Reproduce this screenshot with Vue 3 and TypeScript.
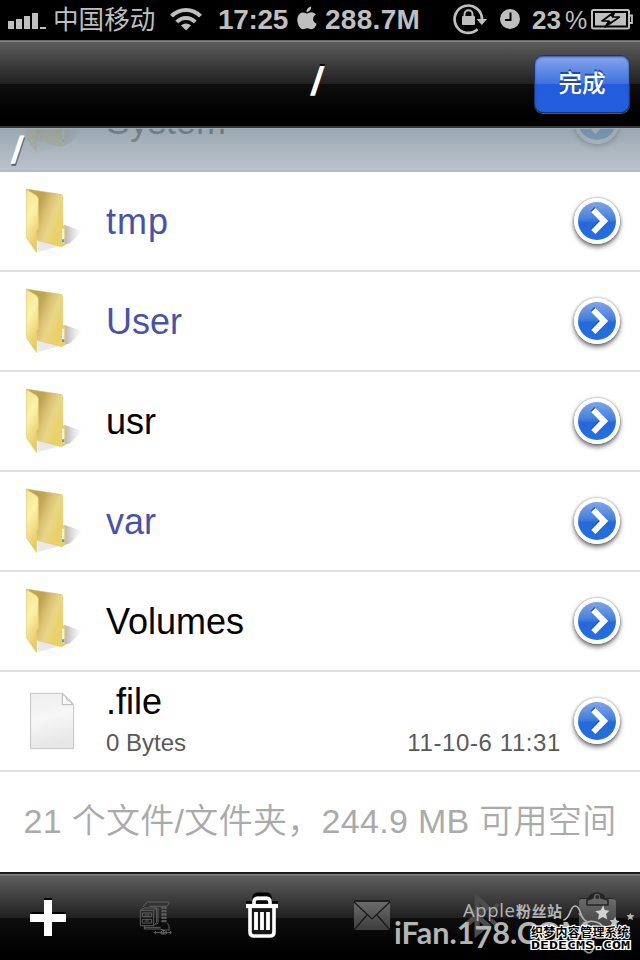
<script setup lang="ts">
interface Entry {
  name: string
  kind: 'folder' | 'file'
  link?: boolean
  wide?: boolean
  size?: string
  date?: string
}

const entries: Entry[] = [
  { name: 'System', kind: 'folder' },
  { name: 'tmp', kind: 'folder', link: true, wide: true },
  { name: 'User', kind: 'folder', link: true },
  { name: 'usr', kind: 'folder' },
  { name: 'var', kind: 'folder', link: true },
  { name: 'Volumes', kind: 'folder' },
  { name: '.file', kind: 'file', size: '0 Bytes', date: '11-10-6 11:31' },
]
</script>

<template>
  <div class="screen">
    <svg class="defs" width="0" height="0">
      <defs>
        <linearGradient id="flap" x1="0" y1="0" x2="0.3" y2="1">
          <stop offset="0" stop-color="#f3e294" />
          <stop offset="0.45" stop-color="#fdf2aa" />
          <stop offset="1" stop-color="#e6c963" />
        </linearGradient>
        <linearGradient id="back" gradientUnits="userSpaceOnUse" x1="112" y1="120" x2="190" y2="150">
          <stop offset="0" stop-color="#bda355" />
          <stop offset="0.3" stop-color="#d9c070" />
          <stop offset="0.6" stop-color="#e9d588" />
          <stop offset="1" stop-color="#ebd064" />
        </linearGradient>
        <linearGradient id="shade" x1="0" y1="0" x2="1" y2="0">
          <stop offset="0" stop-color="#777" stop-opacity="0.6" />
          <stop offset="0.6" stop-color="#999" stop-opacity="0.25" />
          <stop offset="1" stop-color="#999" stop-opacity="0" />
        </linearGradient>
        <linearGradient id="paper" x1="0" y1="0" x2="0.2" y2="1">
          <stop offset="0" stop-color="#eeeeee" />
          <stop offset="0.5" stop-color="#f7f7f7" />
          <stop offset="1" stop-color="#e6e6e6" />
        </linearGradient>
        <linearGradient id="disc" x1="0" y1="0" x2="0" y2="1">
          <stop offset="0" stop-color="#7fa6e8" />
          <stop offset="0.5" stop-color="#3f7bdc" />
          <stop offset="0.52" stop-color="#2468d9" />
          <stop offset="1" stop-color="#266fe0" />
        </linearGradient>
        <linearGradient id="dim" x1="0" y1="0" x2="0" y2="1">
          <stop offset="0" stop-color="#6b6b6b" />
          <stop offset="1" stop-color="#3d3d3d" />
        </linearGradient>
      </defs>
    </svg>

    <header class="status">
      <svg class="bars" width="38" height="16" viewBox="0 0 38 16" fill="#bfbfbf">
        <rect x="0" y="8" width="6" height="8" /><rect x="8" y="6" width="6" height="10" />
        <rect x="16" y="3" width="6" height="13" /><rect x="24" y="0" width="6" height="16" />
        <rect x="32" y="14" width="6" height="2" />
      </svg>
      <span class="carrier">中国移动</span>
      <svg class="wifi" width="32" height="24" viewBox="0 0 32 24" fill="none" stroke="#bfbfbf" stroke-width="4">
        <path d="M1.500 9.200A20 20 0 0 1 30.500 9.200" />
        <path d="M6.800 15A12.500 12.500 0 0 1 25.200 15" />
        <path d="M16 23.500L11 18.500A7 7 0 0 1 21 18.500Z" fill="#bfbfbf" stroke="none" />
      </svg>
      <span class="time">17:25</span>
      <svg class="apple" width="20" height="24" viewBox="0 0 20 24" fill="#bfbfbf">
        <path d="M14.200 0.500C14.500 3.500 12 6 9.500 6C9.200 3.500 11.500 1 14.200 0.500Z" />
        <path d="M10 7.500C11.500 7.500 12.500 6.300 14.600 6.300C16.500 6.300 18 7.300 18.900 8.600C14.800 11 15.400 16.300 19.700 17.800C18.500 20.800 16.700 23.300 14.500 23.300C12.800 23.300 12.200 22.300 10.300 22.300C8.400 22.300 7.600 23.300 6.100 23.300C3 23.300 0.300 18 0.300 13.700C0.300 9 3.200 6.400 6 6.400C7.800 6.400 9 7.500 10 7.500Z" />
      </svg>
      <span class="memory">288.7M</span>
      <svg class="lock" width="34" height="32" viewBox="0 0 34 32">
        <path d="M24.600 26.300A13.700 13.700 0 1 1 29 16" fill="none" stroke="#bfbfbf" stroke-width="2.700" />
        <path d="M23.500 16H34L28.800 22Z" fill="#bfbfbf" />
        <path d="M11.500 14V11.300A4 4 0 0 1 19.500 11.300V14" fill="none" stroke="#bfbfbf" stroke-width="2" />
        <rect x="9" y="13" width="13" height="9" rx="1" fill="#bfbfbf" />
      </svg>
      <svg class="clock" width="20" height="20" viewBox="0 0 20 20">
        <circle cx="10" cy="10" r="10" fill="#bfbfbf" />
        <path d="M10.500 3.500V11H5" fill="none" stroke="#000" stroke-width="2" />
      </svg>
      <span class="charge">23</span><span class="percent">%</span>
      <svg class="battery" width="42" height="21" viewBox="0 0 42 21">
        <rect x="1" y="1" width="37" height="18.500" rx="1.500" fill="none" stroke="#bfbfbf" stroke-width="2" />
        <path d="M38 6.500H41V14H38" fill="none" stroke="#bfbfbf" stroke-width="1.800" />
        <rect x="4" y="4" width="31" height="12.500" fill="#bfbfbf" />
        <path d="M24 2.500L11 12H18L14 18L28.500 8H21.500Z" fill="#bfbfbf" stroke="#000" stroke-width="1.600" stroke-linejoin="round" />
        <path d="M24 2.500L21.500 8L18.500 6.500ZM14 18L18 12L21 13.200Z" fill="#000" />
      </svg>
    </header>

    <nav class="navbar">
      <h1 class="title">/</h1>
      <button class="done">完成</button>
    </nav>

    <main class="content">
      <div class="section"><span class="path">/</span></div>
      <ul class="list">
        <li v-for="e in entries" :key="e.name" class="row">
          <svg v-if="e.kind === 'folder'" class="icon" width="62" height="70" viewBox="66 48 186 210">
            <path d="M115 246L180 228L112 205Z" fill="#999" opacity="0.22" />
            <path d="M190 226L210 220L224 206L246 183L214 172L194 165Z" fill="url(#shade)" />
            <path d="M79 57L182 73Q188 74 188 80V168L194 167Q197 168 197 172V222L186 230L112 211Z" fill="url(#back)" stroke="#d6bc60" stroke-width="1.500" />
            <path d="M79 58L108 76Q115 80 115 88V176L110 182V248L80 205Z" fill="url(#flap)" stroke="#e2ca70" stroke-width="2" />
            <path d="M185 175H194V216L185 218Z" fill="#f7f5e8" stroke="#dec366" stroke-width="2" />
            <rect x="186" y="208" width="7" height="8" fill="#4c9add" />
          </svg>
          <svg v-else class="icon" width="62" height="70" viewBox="66 48 186 210">
            <path d="M92 70H183Q190 70 196 77L216 97Q221 103 221 110V236H92Z" fill="url(#paper)" stroke="#c4c4c4" stroke-width="3" />
            <path d="M187 73V104H218Q212 92 202 90Q200 78 187 73Z" fill="#fafafa" stroke="#b8b8b8" stroke-width="3" />
          </svg>
          <div class="label">
            <span class="name" :class="{ link: e.link, wide: e.wide }">{{ e.name }}</span>
            <span v-if="e.size" class="meta"><span>{{ e.size }}</span><span class="date">{{ e.date }}</span></span>
          </div>
          <span class="go">
            <svg width="46" height="46" viewBox="0 0 46 46">
              <circle cx="23" cy="23" r="23" fill="#fff" />
              <circle cx="23" cy="23" r="19" fill="url(#disc)" />
              <path d="M4 23Q23 18 42 23V24H4Z" fill="#3474db" opacity="0.5" />
              <path d="M19.300 12L30 23L19.300 34" transform="translate(-.8 -1)" fill="none" stroke="#1f4fae" stroke-width="5.500" />
              <path d="M19.300 12L30 23L19.300 34" fill="none" stroke="#fff" stroke-width="6" />
            </svg>
          </span>
        </li>
      </ul>
      <p class="summary">21 个文件/文件夹，244.9 MB 可用空间</p>
    </main>

    <footer class="toolbar">
      <svg width="36" height="44" viewBox="0 0 36 44">
        <path d="M14 4H22V18H36V26H22V42H14V26H0V18H14Z" fill="#000" />
        <path d="M14 6H22V20H36V28H22V42H14V28H0V20H14Z" fill="#fff" />
      </svg>
      <svg width="32" height="44" viewBox="420 100 96 132" fill="none" stroke="#606060" stroke-width="3">
        <path d="M421 149L434 142H470V185L461 195H421ZM421 149H461V195M461 149L470 142M427 157H455V168H427ZM427 176H455V187H427ZM434 163H448M434 181H448" />
        <path d="M427 140L442 124H506V132L500 137H448M474 142V186L468 192M433 195V205H480L490 208H507V194L500 187M433 200H482" />
        <path d="M488 138V187M496 138V187" stroke-width="7" stroke-dasharray="7 3" />
        <path d="M463 216H514M468 211L463 216L468 221M509 211L514 216L509 221M491 208V220M483 213L491 208L499 213V220H483Z" />
      </svg>
      <svg width="32" height="44" viewBox="0 0 32 44">
        <g fill="none" stroke="#000" transform="translate(0 -1.800)">
          <path d="M8 9V6Q8 2 12 2H20Q24 2 24 6V9" stroke-width="3.500" />
          <path d="M0 11H32" stroke-width="4" />
        </g>
        <path d="M4 11H28V38Q28 40 26 40H6Q4 40 4 38Z" fill="#171717" />
        <g fill="none" stroke="#fff">
          <path d="M8 11V8Q8 4.300 11.500 4.300H20.500Q24 4.300 24 8V11" stroke-width="3.600" />
          <path d="M0 12H32" stroke-width="4.200" />
          <path d="M4 12V38Q4 42 8 42H24Q28 42 28 38V12" stroke-width="3.600" />
          <path d="M10 18V36M16 18V36M22 18V36" stroke-width="3.800" />
        </g>
      </svg>
      <svg width="38" height="44" viewBox="0 0 38 44">
        <rect x="2" y="6" width="36" height="29" fill="#202020" />
        <rect x="2" y="8" width="36" height="28" fill="url(#dim)" />
        <path d="M2 8L20 25L38 8M2 36L15 21M38 36L25 21" fill="none" stroke="#171717" stroke-width="1.200" />
      </svg>
      <svg width="36" height="44" viewBox="0 0 36 44" fill="none" stroke="#4c4c4c" stroke-width="5">
        <path d="M3 13L23 31L13 39V4L23 13L2 31" />
        <path d="M27 19L34 10M27 26L34 32" stroke-width="4" />
      </svg>
      <svg width="42" height="44" viewBox="0 0 42 44">
        <path d="M6 4H14Q15-1 23-1T31 4H38Q42 4 42 8V34H5V8Z" fill="#242424" />
        <rect x="5" y="5" width="37" height="31" rx="3" fill="url(#dim)" />
        <path d="M13 11V6L19 4Q19-1 23-1T27 4L34 6V11Z" fill="#666" stroke="#252525" stroke-width="1.500" />
        <circle cx="23.300" cy="3" r="2" fill="#292929" />
      </svg>
    </footer>

    <svg class="watermark" width="250" height="72" viewBox="0 0 250 72">
      <g fill="#b5b5b5">
        <text class="wm-apple" x="73" y="30" textLength="52">Apple</text>
        <text class="wm-cjk" x="126" y="30" textLength="46">粉丝站</text>
        <text class="wm-site" x="4" y="57" textLength="196" lengthAdjust="spacingAndGlyphs">iFan.1<tspan dy="4">7</tspan><tspan dy="-4">8.COM</tspan></text>
      </g>
      <g transform="translate(-70 -27) scale(.33333)">
        <path d="M730 180C754 175 748 138 766 138C784 138 777 176 801 185C820 181 840 187 848 199" fill="none" stroke="#bbb" stroke-width="4.500" />
        <path d="M776 160C790 170 792 188 808 188" fill="none" stroke="#aaa" stroke-width="4" />
        <path d="M786 249C788 277 812 289 820 267" fill="none" stroke="#999" stroke-width="5" />
        <path d="M850 136L854 150L868 152L858 162L862 178L848 171L834 179L837 163L826 154L842 151Z" fill="#d2d2d2" />
        <path d="M886 170L889 181L899 184L890 190L891 200L882 194L872 197L876 188L869 180L880 180Z" fill="#c5c5c5" />
        <path d="M931 158L934 165L943 166L937 172L939 180L931 176L923 180L926 172L919 166L928 165Z" fill="#b8b8b8" />
      </g>
      <g class="wm-cms">
        <text class="wm-cms-cn" x="141" y="50" textLength="98">织梦内容管理系统</text>
        <text class="wm-cms-en" x="141" y="62" textLength="99" lengthAdjust="spacingAndGlyphs">DEDECMS.COM</text>
      </g>
    </svg>
  </div>
</template>

<style>
body {
  margin: 0;
  background: #fff;
}
</style>

<style scoped>
.screen {
  position: relative;
  display: flex;
  flex-direction: column;
  width: 640px;
  height: 960px;
  overflow: hidden;
  background: #fff;
  font-family: 'Liberation Sans', 'Noto Sans CJK SC', sans-serif;
}
.defs {
  position: absolute;
}
svg {
  display: block;
  flex: none;
}
.status {
  display: flex;
  align-items: flex-start;
  box-sizing: border-box;
  height: 40px;
  padding-left: 8px;
  background: #000;
  color: #bfbfbf;
  font-size: 28px;
  font-weight: bold;
  line-height: 40px;
  white-space: nowrap;
}
.status span {
  flex: none;
}
.bars { margin-top: 13px; }
.carrier {
  width: 108px;
  margin-left: 7px;
  font-size: 25.6px;
  font-weight: normal;
}
.wifi { margin: 7px 0 0 9px; }
.time {
  width: 74px;
  margin-left: 16px;
  letter-spacing: -0.3px;
}
.apple { margin: 6px 0 0 5px; }
.memory {
  width: 98px;
  margin-left: 8px;
  letter-spacing: 0.3px;
}
.lock { margin: 3px 0 0 30px; }
.clock { margin: 9px 0 0 13px; }
.charge {
  width: 33px;
  margin-left: 12px;
  font-size: 26px;
}
.percent {
  width: 24px;
  font-size: 25px;
  font-weight: normal;
}
.battery { margin: 9px 0 0 2px; }
.navbar {
  display: grid;
  grid-template-columns: 106px 1fr 106px;
  box-sizing: border-box;
  height: 88px;
  border-top: 1px solid #686868;
  border-bottom: 2px solid #363838;
  background: linear-gradient(#858585 0, #858585 1px, #5c5c5c 1px, #202020 43px, #0e0e0e 43px, #000 75px);
}
.title {
  grid-column: 2;
  margin: 0;
  color: #fff;
  font-size: 40px;
  line-height: 80px;
  text-align: center;
  text-shadow: 0 -2px 0 #000;
  transform: translateX(-3px) skewX(-8deg);
}
.done {
  align-self: start;
  box-sizing: border-box;
  width: 96px;
  height: 58px;
  margin-top: 14px;
  padding: 0 0 5px;
  border: 1px solid #1b3471;
  border-radius: 9px;
  background: linear-gradient(#87a5eb, #3d71df 50%, #205cdc 51%, #235fdd);
  box-shadow: 0 1px 0 #555, inset 0 1px 2px #314f94;
  color: #fff;
  font: 500 23.5px 'Liberation Sans', 'Noto Sans CJK SC', sans-serif;
  text-shadow: 0 -2px 0 #2448a0;
}
.content {
  position: relative;
  height: 744px;
  overflow: hidden;
}
.section {
  position: absolute;
  z-index: 1;
  box-sizing: border-box;
  width: 640px;
  height: 44px;
  padding-left: 12px;
  border-top: 1px solid rgba(155, 170, 180, 0.8);
  border-bottom: 2px solid #b2bcc4;
  background: linear-gradient(rgba(133, 149, 160, 0.82), rgba(172, 182, 192, 0.82));
  color: #fff;
  font-size: 38px;
  font-weight: bold;
  line-height: 42px;
  text-shadow: 1px 2px 0 #56626b;
}
.path {
  display: inline-block;
  transform: skewX(-8deg);
}
.list {
  margin: -56px 0 0;
  padding: 0;
  list-style: none;
}
.row {
  display: flex;
  align-items: flex-start;
  box-sizing: border-box;
  height: 100px;
  padding: 0 20px 0 22px;
  border-bottom: 2px solid #dedede;
}
.row:last-child .name {
  line-height: 60px;
  height: 57px;
}
.icon { margin-top: 14px; }
.label {
  display: flex;
  flex: 1;
  flex-direction: column;
  margin-left: 22px;
}
.name {
  color: #000;
  font-size: 36px;
  line-height: 100px;
}
.name.link { color: #4853a6; }
.name.wide { letter-spacing: 1px; }
.meta {
  display: flex;
  justify-content: space-between;
  padding-right: 13px;
  color: #595959;
  font-size: 24px;
  line-height: 28px;
}
.date { letter-spacing: 0.6px; }
.go {
  width: 46px;
  height: 46px;
  margin-top: 26px;
  border-radius: 50%;
  box-shadow: 0 3px 5px rgba(0, 0, 0, 0.55), 0 0 3px rgba(0, 0, 0, 0.4);
}
.summary {
  margin: 0;
  color: #aaa;
  font-size: 34px;
  font-weight: 350;
  line-height: 98px;
  letter-spacing: 0.3px;
  text-align: center;
  white-space: nowrap;
}
.toolbar {
  display: flex;
  gap: 74px;
  box-sizing: border-box;
  height: 88px;
  padding: 20px 24px 0 30px;
  border-top: 2px solid #1b1b1b;
  background: linear-gradient(#858585 0, #858585 1px, #5e5e5e 2px, #202020 44px, #0e0e0e 44px, #000 76px);
}
.toolbar svg { overflow: visible; }
.watermark {
  position: absolute;
  left: 390px;
  top: 887px;
}
.wm-apple { font: 18.5px 'Open Sans', sans-serif; }
.wm-cjk { font: bold 15px 'Noto Sans CJK SC', sans-serif; }
.wm-site { font: bold 30px Lato, sans-serif; }
.wm-cms {
  fill: #000;
  stroke: #fff;
  stroke-width: 2.2px;
  paint-order: stroke;
}
.wm-cms-cn { font: bold 12px 'Noto Sans CJK SC', sans-serif; }
.wm-cms-en { font: bold 10px 'DejaVu Sans Mono', monospace; }
</style>
